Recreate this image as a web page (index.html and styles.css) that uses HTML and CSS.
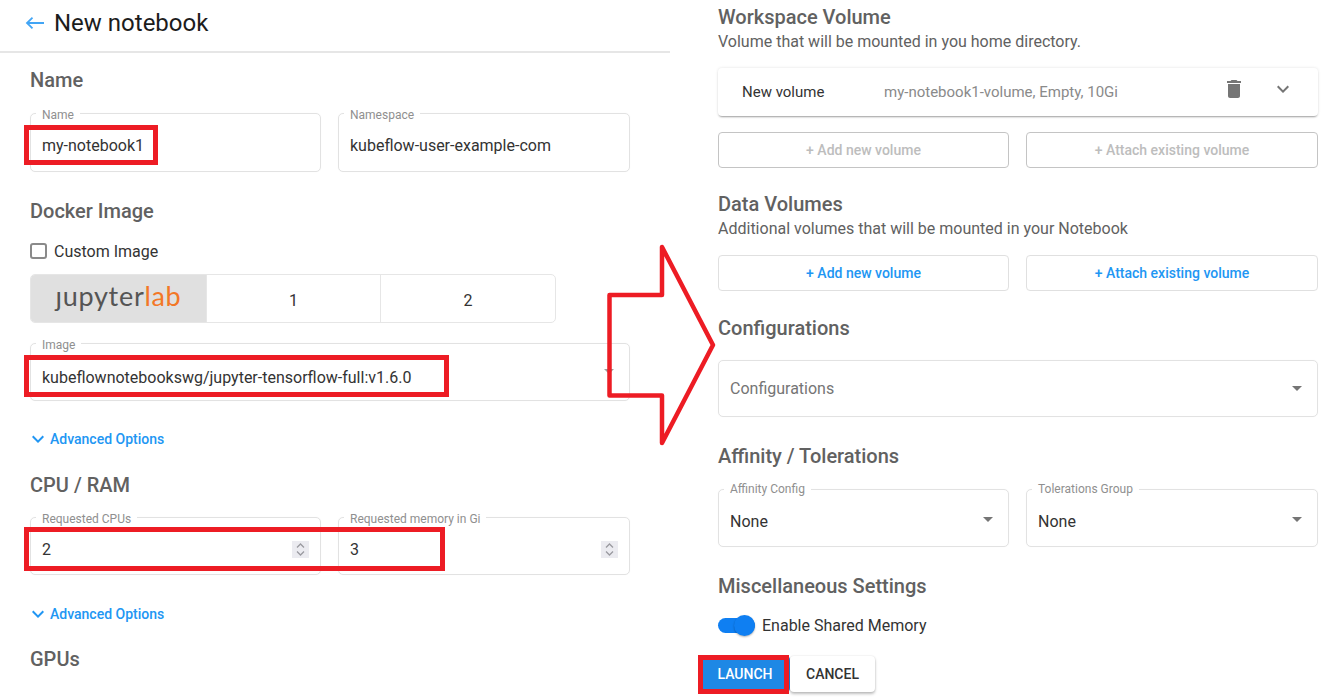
FILE: index.html
```html
<!DOCTYPE html>
<html lang="en">
<head>
<meta charset="utf-8">
<title>New notebook</title>
<link rel="stylesheet" href="styles.css">
</head>
<body>
<div class="page">
  <main class="col-left">
    <header class="topbar">
      <svg class="back" width="20" height="14" viewBox="0 0 20 14"><path d="M19 7H2M7.500 1.700 2 7l5.500 5.300" fill="none" stroke="#42a5f5" stroke-width="1.800"/></svg>
      <h1 class="title">New notebook</h1>
    </header>
    <div class="form">
      <h2 class="heading m15">Name</h2>
      <div class="row two m21">
        <div class="field h59 low"><span class="legend">Name</span><span class="value">my-notebook1</span></div>
        <div class="field h59 low"><span class="legend">Namespace</span><span class="value">kubeflow-user-example-com</span></div>
      </div>
      <h2 class="heading m27">Docker Image</h2>
      <label class="check m16"><span class="box"></span>Custom Image</label>
      <div class="tabs m11">
        <div class="tab tab-logo"><span class="logo">ȷupyter<span class="lab">lab</span></span></div>
        <div class="tab">1</div>
        <div class="tab">2</div>
      </div>
      <div class="field h58 lower m20"><span class="legend">Image</span><span class="value">kubeflownotebookswg/jupyter-tensorflow-full:v1.6.0</span>
        <svg class="caret" width="24" height="24" viewBox="0 0 24 24"><path d="M7 10l5 5 5-5z"/></svg></div>
      <div class="advanced m26"><svg width="24" height="24" viewBox="0 0 24 24"><path d="M16.590 8.590L12 13.170 7.410 8.590 6 10l6 6 6-6z"/></svg>Advanced Options</div>
      <h2 class="heading m22">CPU / RAM</h2>
      <div class="row two m20">
        <div class="field h58 low"><span class="legend">Requested CPUs</span><span class="value">2</span>
          <span class="spin"><svg width="17" height="17" viewBox="0 0 17 17"><path d="M5 6.500 8.500 3 12 6.500M5 10.500 8.500 14 12 10.500" fill="none" stroke="#9a9aa0" stroke-width="1.300"/></svg></span></div>
        <div class="field h58 low"><span class="legend">Requested memory in Gi</span><span class="value">3</span>
          <span class="spin"><svg width="17" height="17" viewBox="0 0 17 17"><path d="M5 6.500 8.500 3 12 6.500M5 10.500 8.500 14 12 10.500" fill="none" stroke="#9a9aa0" stroke-width="1.300"/></svg></span></div>
      </div>
      <div class="advanced m27"><svg width="24" height="24" viewBox="0 0 24 24"><path d="M16.590 8.590L12 13.170 7.410 8.590 6 10l6 6 6-6z"/></svg>Advanced Options</div>
      <h2 class="heading m21">GPUs</h2>
    </div>
  </main>
  <section class="col-right">
    <h2 class="heading m5">Workspace Volume</h2>
    <p class="sub">Volume that will be mounted in you home directory.</p>
    <div class="card m16">
      <span class="card-name">New volume</span>
      <span class="card-desc">my-notebook1-volume, Empty, 10Gi</span>
      <svg class="trash" width="24" height="24" viewBox="0 0 24 24"><path d="M6 19c0 1.100.9 2 2 2h8c1.100 0 2-.9 2-2V7H6v12zM19 4h-3.500l-1-1h-5l-1 1H5v2h14V4z"/></svg>
      <svg class="expand" width="24" height="24" viewBox="0 0 24 24"><path d="M16.590 8.590L12 13.170 7.410 8.590 6 10l6 6 6-6z"/></svg>
    </div>
    <div class="row two-r m16">
      <div class="outline muted">+ Add new volume</div>
      <div class="outline muted">+ Attach existing volume</div>
    </div>
    <h2 class="heading m24">Data Volumes</h2>
    <p class="sub">Additional volumes that will be mounted in your Notebook</p>
    <div class="row two-r m16">
      <div class="outline active">+ Add new volume</div>
      <div class="outline active">+ Attach existing volume</div>
    </div>
    <h2 class="heading m25">Configurations</h2>
    <div class="field h57 m20"><span class="value placeholder">Configurations</span>
      <svg class="caret dark" width="24" height="24" viewBox="0 0 24 24"><path d="M7 10l5 5 5-5z"/></svg></div>
    <h2 class="heading m27">Affinity / Tolerations</h2>
    <div class="row two-r m21">
      <div class="field h58"><span class="legend high">Affinity Config</span><span class="value none">None</span>
        <svg class="caret dark up" width="24" height="24" viewBox="0 0 24 24"><path d="M7 10l5 5 5-5z"/></svg></div>
      <div class="field h58"><span class="legend high">Tolerations Group</span><span class="value none">None</span>
        <svg class="caret dark up" width="24" height="24" viewBox="0 0 24 24"><path d="M7 10l5 5 5-5z"/></svg></div>
    </div>
    <h2 class="heading m27">Miscellaneous Settings</h2>
    <div class="toggle-row m15"><span class="toggle"><span class="thumb"></span></span>Enable Shared Memory</div>
    <div class="actions">
      <button class="btn launch">LAUNCH</button>
      <button class="btn cancel">CANCEL</button>
    </div>
  </section>

  <div class="mark mark-name"></div>
  <div class="mark mark-image"></div>
  <div class="mark mark-cpu"></div>
  <div class="mark mark-launch"></div>
  <svg class="flow-arrow" width="120" height="210" viewBox="600 240 120 210">
    <path d="M662 247V295H609.500V395.500H662V443L713 345Z" fill="none" stroke="#ed1c24" stroke-width="4.500" stroke-linejoin="round"/>
  </svg>
</div>
</body>
</html>
```
FILE: styles.css
```css
* { box-sizing: border-box; }
html, body { margin: 0; padding: 0; background: #fff; }
body { font-family: Roboto, "Liberation Sans", sans-serif; color: #333; overflow: hidden; }
.page { position: relative; display: flex; width: 1324px; height: 699px; overflow: hidden; }

.col-left { width: 670px; flex: none; }
.col-right { width: 600px; flex: none; margin-left: 48px; }
.form { padding: 0 40px 0 30px; }

.topbar { display: flex; align-items: center; height: 53px; padding: 0 0 6px 25px; border-bottom: 2px solid #e6e6e6; }
.back { margin-right: 9px; }
.title { margin: 0; font-size: 24px; font-weight: 400; line-height: 32px; color: #1c1c1c; }

.heading { margin-bottom: 0; font-size: 20px; font-weight: 500; line-height: 24px; color: #616161; }
.sub { margin: 3px 0 0; font-size: 16px; line-height: 20px; color: #616161; }

.m5 { margin-top: 5px; }
.m11 { margin-top: 11px; }
.m15 { margin-top: 15px; }
.m16 { margin-top: 16px; }
.m20 { margin-top: 20px; }
.m21 { margin-top: 21px; }
.m22 { margin-top: 22px; }
.m24 { margin-top: 24px; }
.m25 { margin-top: 25px; }
.m26 { margin-top: 26px; }
.m27 { margin-top: 27px; }

.row { display: grid; }
.two { grid-template-columns: 291px 292px; column-gap: 17px; }
.two-r { grid-template-columns: 291px 292px; column-gap: 17px; }

.field { position: relative; display: flex; align-items: center; padding: 5px 11px 0; border: 1px solid #e2e2e2; border-radius: 5px; box-shadow: 0 0 1px rgba(0,0,0,.06); }
.low { padding-top: 7px; }
.lower { padding-top: 11px; }
.h57 { height: 57px; }
.h58 { height: 58px; }
.h59 { height: 59px; }
.legend { position: absolute; top: -6px; left: 5px; padding: 0 6px; background: #fff; font-size: 12px; line-height: 14px; color: #8f8f8f; white-space: nowrap; }
.legend.high { top: -8px; }
.value { font-size: 16px; line-height: 20px; color: #333; }
.field .placeholder { margin-top: -5px; color: #757575; }
.none { margin-top: 3px; }
.caret { position: absolute; right: 8px; top: 15px; fill: #9e9e9e; }
.caret.dark { fill: #757575; }
.caret.up { top: 17px; }

.spin { position: absolute; right: 11px; top: 23px; width: 17px; height: 17px; background: #ebebf0; }
.spin svg { display: block; }

.check { display: flex; align-items: center; height: 24px; font-size: 16px; color: #333; }
.box { width: 17px; height: 16px; margin-right: 7px; border: 2px solid #8a8a8a; border-radius: 3px; background: #fff; }

.tabs { display: grid; grid-template-columns: 175px 174px 175px; width: 526px; height: 49px; border: 1px solid #e6e6e6; border-radius: 5px; overflow: hidden; }
.tab { display: flex; align-items: center; justify-content: center; padding-top: 4px; font-size: 16px; color: #333; border-left: 1px solid #e6e6e6; }
.tab-logo { background: #e0e0e0; border-left: 0; padding-top: 0; }
.logo { font-family: Lato, "Noto Sans", sans-serif; font-size: 27px; font-weight: 400; letter-spacing: .7px; line-height: 32px; color: #555; margin-top: -5px; }
.lab { color: #f37726; }

.advanced { display: flex; align-items: center; height: 24px; margin-left: -4px; font-size: 14px; font-weight: 500; color: #2196f3; }
.advanced svg { fill: #2196f3; }

.card { display: flex; align-items: center; height: 48px; padding: 0 23px 0 24px; border-radius: 4px; background: #fff; box-shadow: 0 2px 2px -1px rgba(0,0,0,.35), 0 0 3px rgba(0,0,0,.12); }
.card-name { width: 142px; font-size: 15px; color: #333; }
.card-desc { flex: 1; font-size: 15px; color: #8a8a8a; }
.trash { fill: #757575; margin: -6px 25px 0 0; }
.expand { fill: #757575; margin-top: -6px; }

.outline { display: flex; align-items: center; justify-content: center; height: 36px; border: 1px solid #d6d6d6; border-radius: 4px; font-size: 14px; font-weight: 500; }
.muted { color: #bdbdbd; border-color: #c4c4c4; }
.active { color: #2196f3; border-color: #e0e0e0; }

.toggle-row { display: flex; align-items: center; height: 24px; font-size: 16px; color: #333; }
.toggle { position: relative; width: 37px; height: 15px; margin-right: 7px; border-radius: 8px; background: #0f7ff2; }
.thumb { position: absolute; right: 0; top: -3px; width: 21px; height: 21px; border-radius: 50%; background: #0f7ff2; box-shadow: 0 1px 2px rgba(0,0,0,.3); }

.actions { display: flex; align-items: center; margin: 19px 0 0 -18px; }
.btn { height: 36px; border: 0; border-radius: 4px; font-family: inherit; font-size: 14px; font-weight: 500; }
.launch { width: 90px; background: #1e88e5; color: #fff; }
.cancel { width: 85px; background: #fff; color: #333; box-shadow: 0 2px 3px rgba(0,0,0,.25), 0 0 2px rgba(0,0,0,.12); }

.mark { position: absolute; border: 5px solid #ed1c24; }
.mark-name { left: 24px; top: 125px; width: 134px; height: 40px; }
.mark-image { left: 24px; top: 355px; width: 425px; height: 42px; }
.mark-cpu { left: 24px; top: 527px; width: 421px; height: 44px; }
.mark-launch { left: 698px; top: 655px; width: 91px; height: 39px; }
.flow-arrow { position: absolute; left: 600px; top: 240px; }
```
